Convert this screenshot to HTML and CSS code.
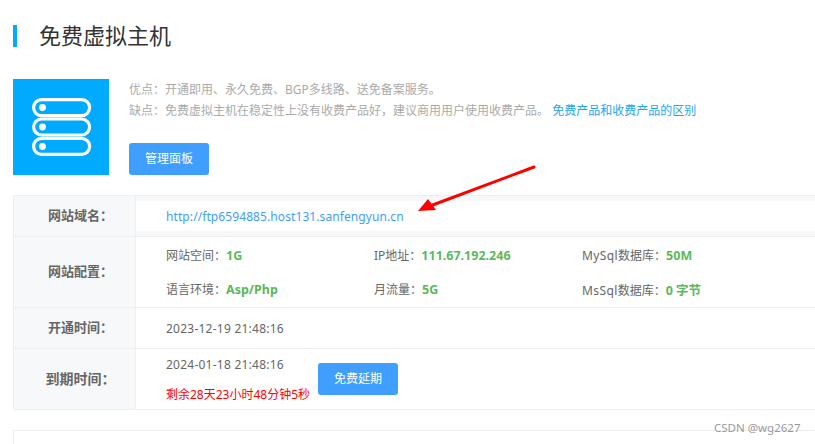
FILE: index.html
```html
<!DOCTYPE html>
<html lang="zh-CN">
<head>
  <meta charset="UTF-8">
  <meta name="viewport" content="width=device-width, initial-scale=1.0">
  <title>免费虚拟主机</title>
  <link rel="stylesheet" href="styles.css">
</head>
<body>
  <h1 class="page-title">免费虚拟主机</h1>

  <div class="intro">
    <div class="intro-icon">
      <svg width="96" height="96" viewBox="0 0 96 96" fill="none" stroke="#fff" stroke-width="3.2">
        <rect x="20.6" y="20.6" width="56" height="16" rx="8"/>
        <rect x="20.6" y="40" width="56" height="16" rx="8"/>
        <rect x="20.6" y="59.4" width="56" height="16" rx="8"/>
        <circle cx="29.5" cy="28.5" r="3.4" fill="#fff" stroke="none"/>
        <circle cx="29.5" cy="48" r="3.4" fill="#fff" stroke="none"/>
        <circle cx="29.5" cy="67.5" r="3.4" fill="#fff" stroke="none"/>
      </svg>
    </div>
    <div class="intro-body">
      <p class="intro-line">优点：开通即用、永久免费、BGP多线路、送免备案服务。</p>
      <p class="intro-line">缺点：免费虚拟主机在稳定性上没有收费产品好，建议商用用户使用收费产品。 <a class="link" href="#">免费产品和收费产品的区别</a></p>
      <a class="btn intro-btn" href="#">管理面板</a>
    </div>
  </div>

  <div class="info">
    <div class="row row-domain">
      <div class="label">网站域名：</div>
      <div class="value value-domain"><a class="link-url" href="#">http://ftp6594885.host131.sanfengyun.cn</a></div>
    </div>
    <div class="row row-spec">
      <div class="label">网站配置：</div>
      <div class="value spec">
        <div>网站空间：<b>1G</b></div>
        <div>IP地址：<b>111.67.192.246</b></div>
        <div><span class="db-name">MySql</span>数据库：<b>50M</b></div>
        <div>语言环境：<b>Asp/Php</b></div>
        <div>月流量：<b>5G</b></div>
        <div><span class="db-name">MsSql</span>数据库：<b>0 字节</b></div>
      </div>
    </div>
    <div class="row row-open">
      <div class="label">开通时间：</div>
      <div class="value date">2023-12-19 21:48:16</div>
    </div>
    <div class="row row-expire">
      <div class="label label-big">到期时间：</div>
      <div class="value value-expire">
        <div class="expire-text">
          <div class="date">2024-01-18 21:48:16</div>
          <div class="remain">剩余28天23小时48分钟5秒</div>
        </div>
        <a class="btn" href="#">免费延期</a>
      </div>
    </div>
  </div>

  <div class="next-box"></div>

  <!-- annotation over the screenshot -->
  <svg class="arrow" width="815" height="444" viewBox="0 0 815 444">
    <line x1="534" y1="167" x2="430" y2="206" stroke="#f00" stroke-width="3" stroke-linecap="round"/>
    <polygon points="418,211 428,199 436,210" fill="#f00"/>
  </svg>
  <div class="watermark">CSDN @wg2627</div>
</body>
</html>
```

FILE: styles.css
```css
html, body {
  margin: 0;
  height: 444px;
  overflow: hidden;
}
body {
  position: relative;
  width: 815px;
  background: #fff;
  color: #666;
  font-family: "Noto Sans", "Noto Sans CJK SC", sans-serif;
  font-size: 12px;
  padding: 25px 0 0 13px;
  box-sizing: border-box;
}
.page-title {
  margin: 0;
  height: 22px;
  line-height: 21px;
  border-left: 4px solid #00aaff;
  padding-left: 22px;
  font-size: 22px;
  font-weight: 400;
  color: #333;
}
.intro {
  display: flex;
  gap: 20px;
  margin-top: 32px;
}
.intro-icon {
  width: 96px;
  height: 96px;
  background: #00aaff;
}
.intro-icon svg {
  display: block;
}
.intro-body {
  display: flex;
  flex-direction: column;
  align-items: flex-start;
}
.intro-line {
  margin: 0;
  height: 21px;
  line-height: 21px;
  color: #aaa;
}
.link {
  color: #1ea5f5;
  text-decoration: none;
}
.btn {
  display: block;
  width: 80px;
  height: 32px;
  line-height: 32px;
  flex: none;
  border-radius: 3px;
  background: #409eff;
  color: #fff;
  text-align: center;
  text-decoration: none;
}
.intro-btn {
  margin-top: 22px;
}
.info {
  width: 900px;
  margin-top: 20px;
  border: 1px solid #eeeeee;
  border-width: 1px 0 1px 1px;
  box-sizing: border-box;
}
.row {
  display: flex;
  box-sizing: border-box;
  border-bottom: 1px solid #eeeeee;
}
.row-domain {
  height: 41px;
  background: #f7f8fa;
}
.row-spec {
  height: 71px;
}
.row-open {
  height: 41px;
}
.row-expire {
  height: 60px;
  border-bottom: 0;
}
.label {
  width: 122px;
  flex: none;
  box-sizing: border-box;
  display: flex;
  align-items: center;
  justify-content: center;
  padding: 0 0 3px 12px;
  background: #f7f8fa;
  border-right: 1px solid #eeeeee;
  font-size: 13px;
  font-weight: 700;
}
.label-big {
  font-size: 14px;
}
.value {
  flex: 1;
  display: flex;
  align-items: center;
  padding-left: 30px;
}
.value-domain {
  background: #fff;
  margin: 5px 0;
}
.link-url {
  color: #409eff;
  letter-spacing: 0.09px;
  text-decoration: none;
}
.date {
  letter-spacing: 0.24px;
}
.spec {
  display: grid;
  grid-template-columns: 208px 208px 1fr;
  grid-auto-rows: 34px;
  align-content: center;
}
.spec b {
  color: #5cb85c;
  font-size: 12.5px;
}
.db-name {
  letter-spacing: 0.4px;
}
.value-expire {
  gap: 8px;
}
.expire-text {
  display: flex;
  flex-direction: column;
  gap: 12px;
}
.remain {
  color: #f00;
}
.next-box {
  width: 900px;
  height: 40px;
  margin-top: 20px;
  border: 1px solid #eeeeee;
  box-sizing: border-box;
}
.arrow {
  position: absolute;
  left: 0;
  top: 0;
}
.watermark {
  position: absolute;
  left: 714px;
  top: 420px;
  font-size: 11.5px;
  color: #999;
}
```
